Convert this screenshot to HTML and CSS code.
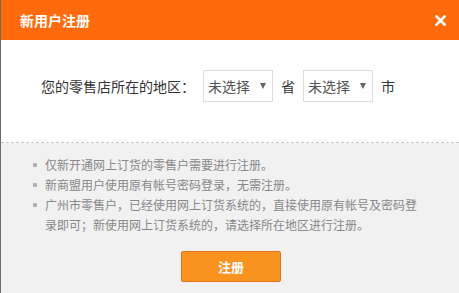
FILE: index.html
```html
<!DOCTYPE html>
<html lang="zh">
<head>
<meta charset="utf-8">
<title>新用户注册</title>
<link rel="stylesheet" href="styles.css">
</head>
<body>
<div class="dialog">
  <div class="header">
    <span class="title">新用户注册</span>
    <span class="close">
      <svg width="11" height="11" viewBox="0 0 11 11"><path d="M1.5 1.5 L9.5 9.5 M9.5 1.5 L1.5 9.5" stroke="#fff" stroke-width="2.6" stroke-linecap="square"/></svg>
    </span>
  </div>
  <div class="main">
    <div class="row">
      <span class="label">您的零售店所在的地区：</span>
      <div class="select"><span>未选择</span><i class="arrow"></i></div>
      <span class="unit">省</span>
      <div class="select"><span>未选择</span><i class="arrow"></i></div>
      <span class="unit">市</span>
    </div>
  </div>
  <div class="foot">
    <ul class="notes">
      <li>仅新开通网上订货的零售户需要进行注册。</li>
      <li>新商盟用户使用原有帐号密码登录，无需注册。</li>
      <li>广州市零售户，已经使用网上订货系统的，直接使用原有帐号及密码登录即可；新使用网上订货系统的，请选择所在地区进行注册。</li>
    </ul>
    <div class="actions"><button class="btn">注册</button></div>
  </div>
</div>
</body>
</html>
```

FILE: styles.css
```css
html, body {
  margin: 0;
  padding: 0;
  background: #f1f1f1;
}
body {
  font-family: "Noto Sans CJK SC", "Microsoft YaHei", sans-serif;
  width: 459px;
  height: 293px;
  overflow: hidden;
}
.dialog {
  border-left: 1px solid #6e6e64;
  height: 293px;
  box-sizing: border-box;
  display: flex;
  flex-direction: column;
}
.header {
  height: 40px;
  background: #ff6b0c;
  display: flex;
  align-items: center;
  justify-content: space-between;
  padding: 0 13px 0 19px;
}
.title {
  color: #fff;
  font-size: 14px;
  font-weight: bold;
  line-height: 20px;
}
.close {
  display: flex;
  width: 11px;
  height: 11px;
}
.main {
  background: #fff;
  padding: 30px 0 40px 40px;
  border-bottom: 1px dashed #c8c8c8;
}
.row {
  display: flex;
  align-items: center;
  gap: 8px;
  height: 32px;
  font-size: 14px;
  color: #333;
}
.label {
  width: 154px;
  white-space: nowrap;
}
.select {
  width: 70px;
  height: 32px;
  box-sizing: border-box;
  border: 1px solid #dcdcdc;
  background: #fff;
  display: flex;
  align-items: center;
  justify-content: space-between;
  padding: 0 6px 0 4px;
  color: #555;
  font-size: 14px;
}
.arrow {
  width: 0;
  height: 0;
  border-left: 3px solid transparent;
  border-right: 3px solid transparent;
  border-top: 6px solid #666;
}
.unit {
  width: 14px;
}
.foot {
  flex: 1;
  background: #f1f1f1;
  padding: 12px 36px 0 32px;
  display: flex;
  flex-direction: column;
}
.notes {
  list-style: none;
  margin: 0;
  padding: 0;
  font-size: 12px;
  line-height: 20px;
  color: #888;
}
.notes li {
  position: relative;
  padding-left: 12px;
}
.notes li::before {
  content: "";
  position: absolute;
  left: 0;
  top: 8px;
  width: 4px;
  height: 4px;
  border-radius: 1px;
  background: #b0b0b0;
}
.actions {
  display: flex;
  justify-content: center;
  margin-top: 16px;
  padding-left: 6px;
}
.btn {
  width: 100px;
  height: 31px;
  background: #f8931f;
  border: 1px solid #e0731c;
  border-radius: 2px;
  color: #fff;
  font-family: inherit;
  font-size: 13px;
  font-weight: bold;
  padding: 0;
}
```
